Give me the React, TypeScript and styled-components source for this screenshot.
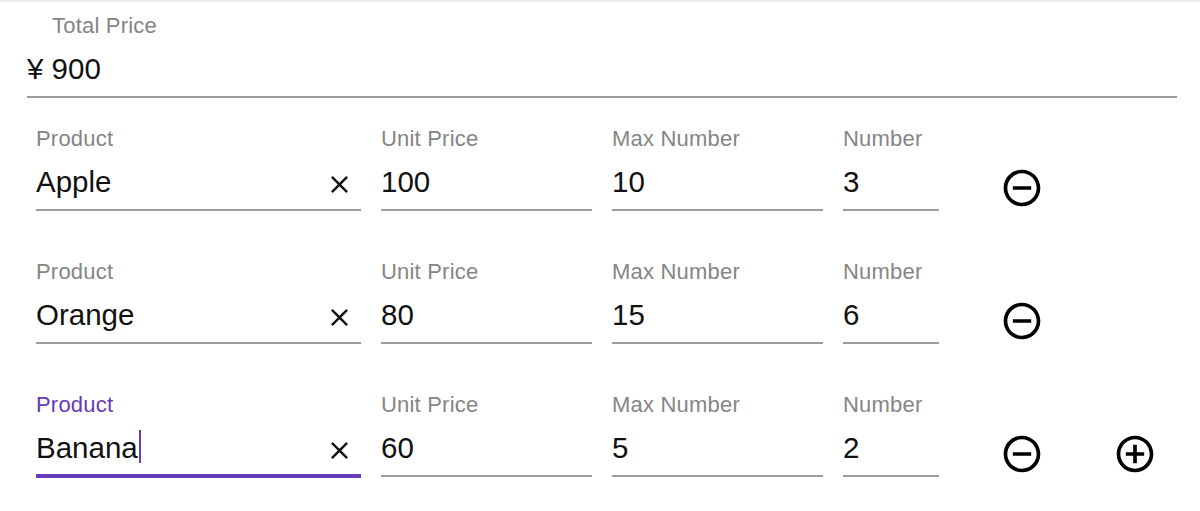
import React from "react";
import styled, { createGlobalStyle } from "styled-components";

const GlobalStyle = createGlobalStyle`
  html, body {
    margin: 0;
    padding: 0;
    background: #ffffff;
  }
  body {
    font-family: "Liberation Sans", Arial, Helvetica, sans-serif;
    color: #111111;
  }
`;

const PURPLE = "#673ab7";
const LABEL = "#858585";
const LINE = "#9c9c9c";

const Page = styled.div`
  width: 1200px;
  min-height: 511px;
  display: flex;
  flex-direction: column;
`;

const TopEdge = styled.div`
  height: 3px;
  background: linear-gradient(#e4e4e4, #ffffff);
`;

const TotalField = styled.div`
  margin: 10px 0 0 27px;
  width: 1150px;
  display: flex;
  flex-direction: column;
`;

const Label = styled.div<{ $focused?: boolean; $indent?: number }>`
  font-size: 22px;
  line-height: 26px;
  letter-spacing: 0.2px;
  color: ${(p) => (p.$focused ? PURPLE : LABEL)};
  padding-left: ${(p) => p.$indent ?? 0}px;
  white-space: nowrap;
`;

const InputArea = styled.div<{ $focused?: boolean }>`
  margin-top: 12px;
  display: flex;
  align-items: center;
  justify-content: space-between;
  font-size: 29.5px;
  line-height: 36px;
  color: #111111;
  padding-bottom: ${(p) => (p.$focused ? 8 : 9)}px;
  border-bottom: ${(p) => (p.$focused ? `4px solid ${PURPLE}` : `2px solid ${LINE}`)};
  white-space: nowrap;
`;

const Rows = styled.div`
  margin: 28px 0 0 36px;
  display: flex;
  flex-direction: column;
  gap: 48px;
`;

const Row = styled.div`
  display: flex;
  align-items: flex-start;
`;

const Fields = styled.div`
  display: flex;
  gap: 20px;
`;

const Field = styled.div<{ $width: number }>`
  width: ${(p) => p.$width}px;
  display: flex;
  flex-direction: column;
`;

const Caret = styled.span`
  display: inline-block;
  width: 2px;
  height: 33px;
  margin-left: 1px;
  vertical-align: -5px;
  background: ${PURPLE};
`;

const ClearButton = styled.span`
  width: 29px;
  height: 29px;
  margin: 4px 7px 0 0;
  display: flex;
  color: #111111;
  svg {
    width: 29px;
    height: 29px;
    fill: currentColor;
  }
`;

const IconButton = styled.span<{ $ml: number }>`
  width: 44px;
  height: 44px;
  margin: 40px 0 0 ${(p) => p.$ml}px;
  display: flex;
  color: #000000;
  svg {
    width: 44px;
    height: 44px;
    fill: currentColor;
  }
`;

const ClearIcon = () => (
  <svg viewBox="0 0 24 24">
    <path d="M19 6.41L17.59 5 12 10.59 6.41 5 5 6.41 10.59 12 5 17.59 6.41 19 12 13.41 17.59 19 19 17.59 13.41 12z" />
  </svg>
);

const RemoveIcon = () => (
  <svg viewBox="0 0 24 24">
    <path d="M7 11v2h10v-2H7zm5-9C6.48 2 2 6.48 2 12s4.48 10 10 10 10-4.48 10-10S17.52 2 12 2zm0 18c-4.41 0-8-3.59-8-8s3.59-8 8-8 8 3.59 8 8-3.59 8-8 8z" />
  </svg>
);

const AddIcon = () => (
  <svg viewBox="0 0 24 24">
    <path d="M13 7h-2v4H7v2h4v4h2v-4h4v-2h-4V7zm-1-5C6.48 2 2 6.48 2 12s4.48 10 10 10 10-4.48 10-10S17.52 2 12 2zm0 18c-4.41 0-8-3.59-8-8s3.59-8 8-8 8 3.59 8 8-3.59 8-8 8z" />
  </svg>
);

type Item = { product: string; price: number; max: number; count: number };

const items: Item[] = [
  { product: "Apple", price: 100, max: 10, count: 3 },
  { product: "Orange", price: 80, max: 15, count: 6 },
  { product: "Banana", price: 60, max: 5, count: 2 },
];

export default function App() {
  const total = items.reduce((s, i) => s + i.price * i.count, 0);
  return (
    <Page>
      <GlobalStyle />
      <TopEdge />
      <TotalField>
        <Label $indent={25}>Total Price</Label>
        <InputArea>¥ {total}</InputArea>
      </TotalField>
      <Rows>
        {items.map((item, idx) => {
          const last = idx === items.length - 1;
          return (
            <Row key={item.product}>
              <Fields>
                <Field $width={325}>
                  <Label $focused={last}>Product</Label>
                  <InputArea $focused={last}>
                    <span>
                      {item.product}
                      {last && <Caret />}
                    </span>
                    <ClearButton>
                      <ClearIcon />
                    </ClearButton>
                  </InputArea>
                </Field>
                <Field $width={211}>
                  <Label>Unit Price</Label>
                  <InputArea>{item.price}</InputArea>
                </Field>
                <Field $width={211}>
                  <Label>Max Number</Label>
                  <InputArea>{item.max}</InputArea>
                </Field>
                <Field $width={96}>
                  <Label>Number</Label>
                  <InputArea>{item.count}</InputArea>
                </Field>
              </Fields>
              <IconButton $ml={61}>
                <RemoveIcon />
              </IconButton>
              {last && (
                <IconButton $ml={69}>
                  <AddIcon />
                </IconButton>
              )}
            </Row>
          );
        })}
      </Rows>
    </Page>
  );
}
